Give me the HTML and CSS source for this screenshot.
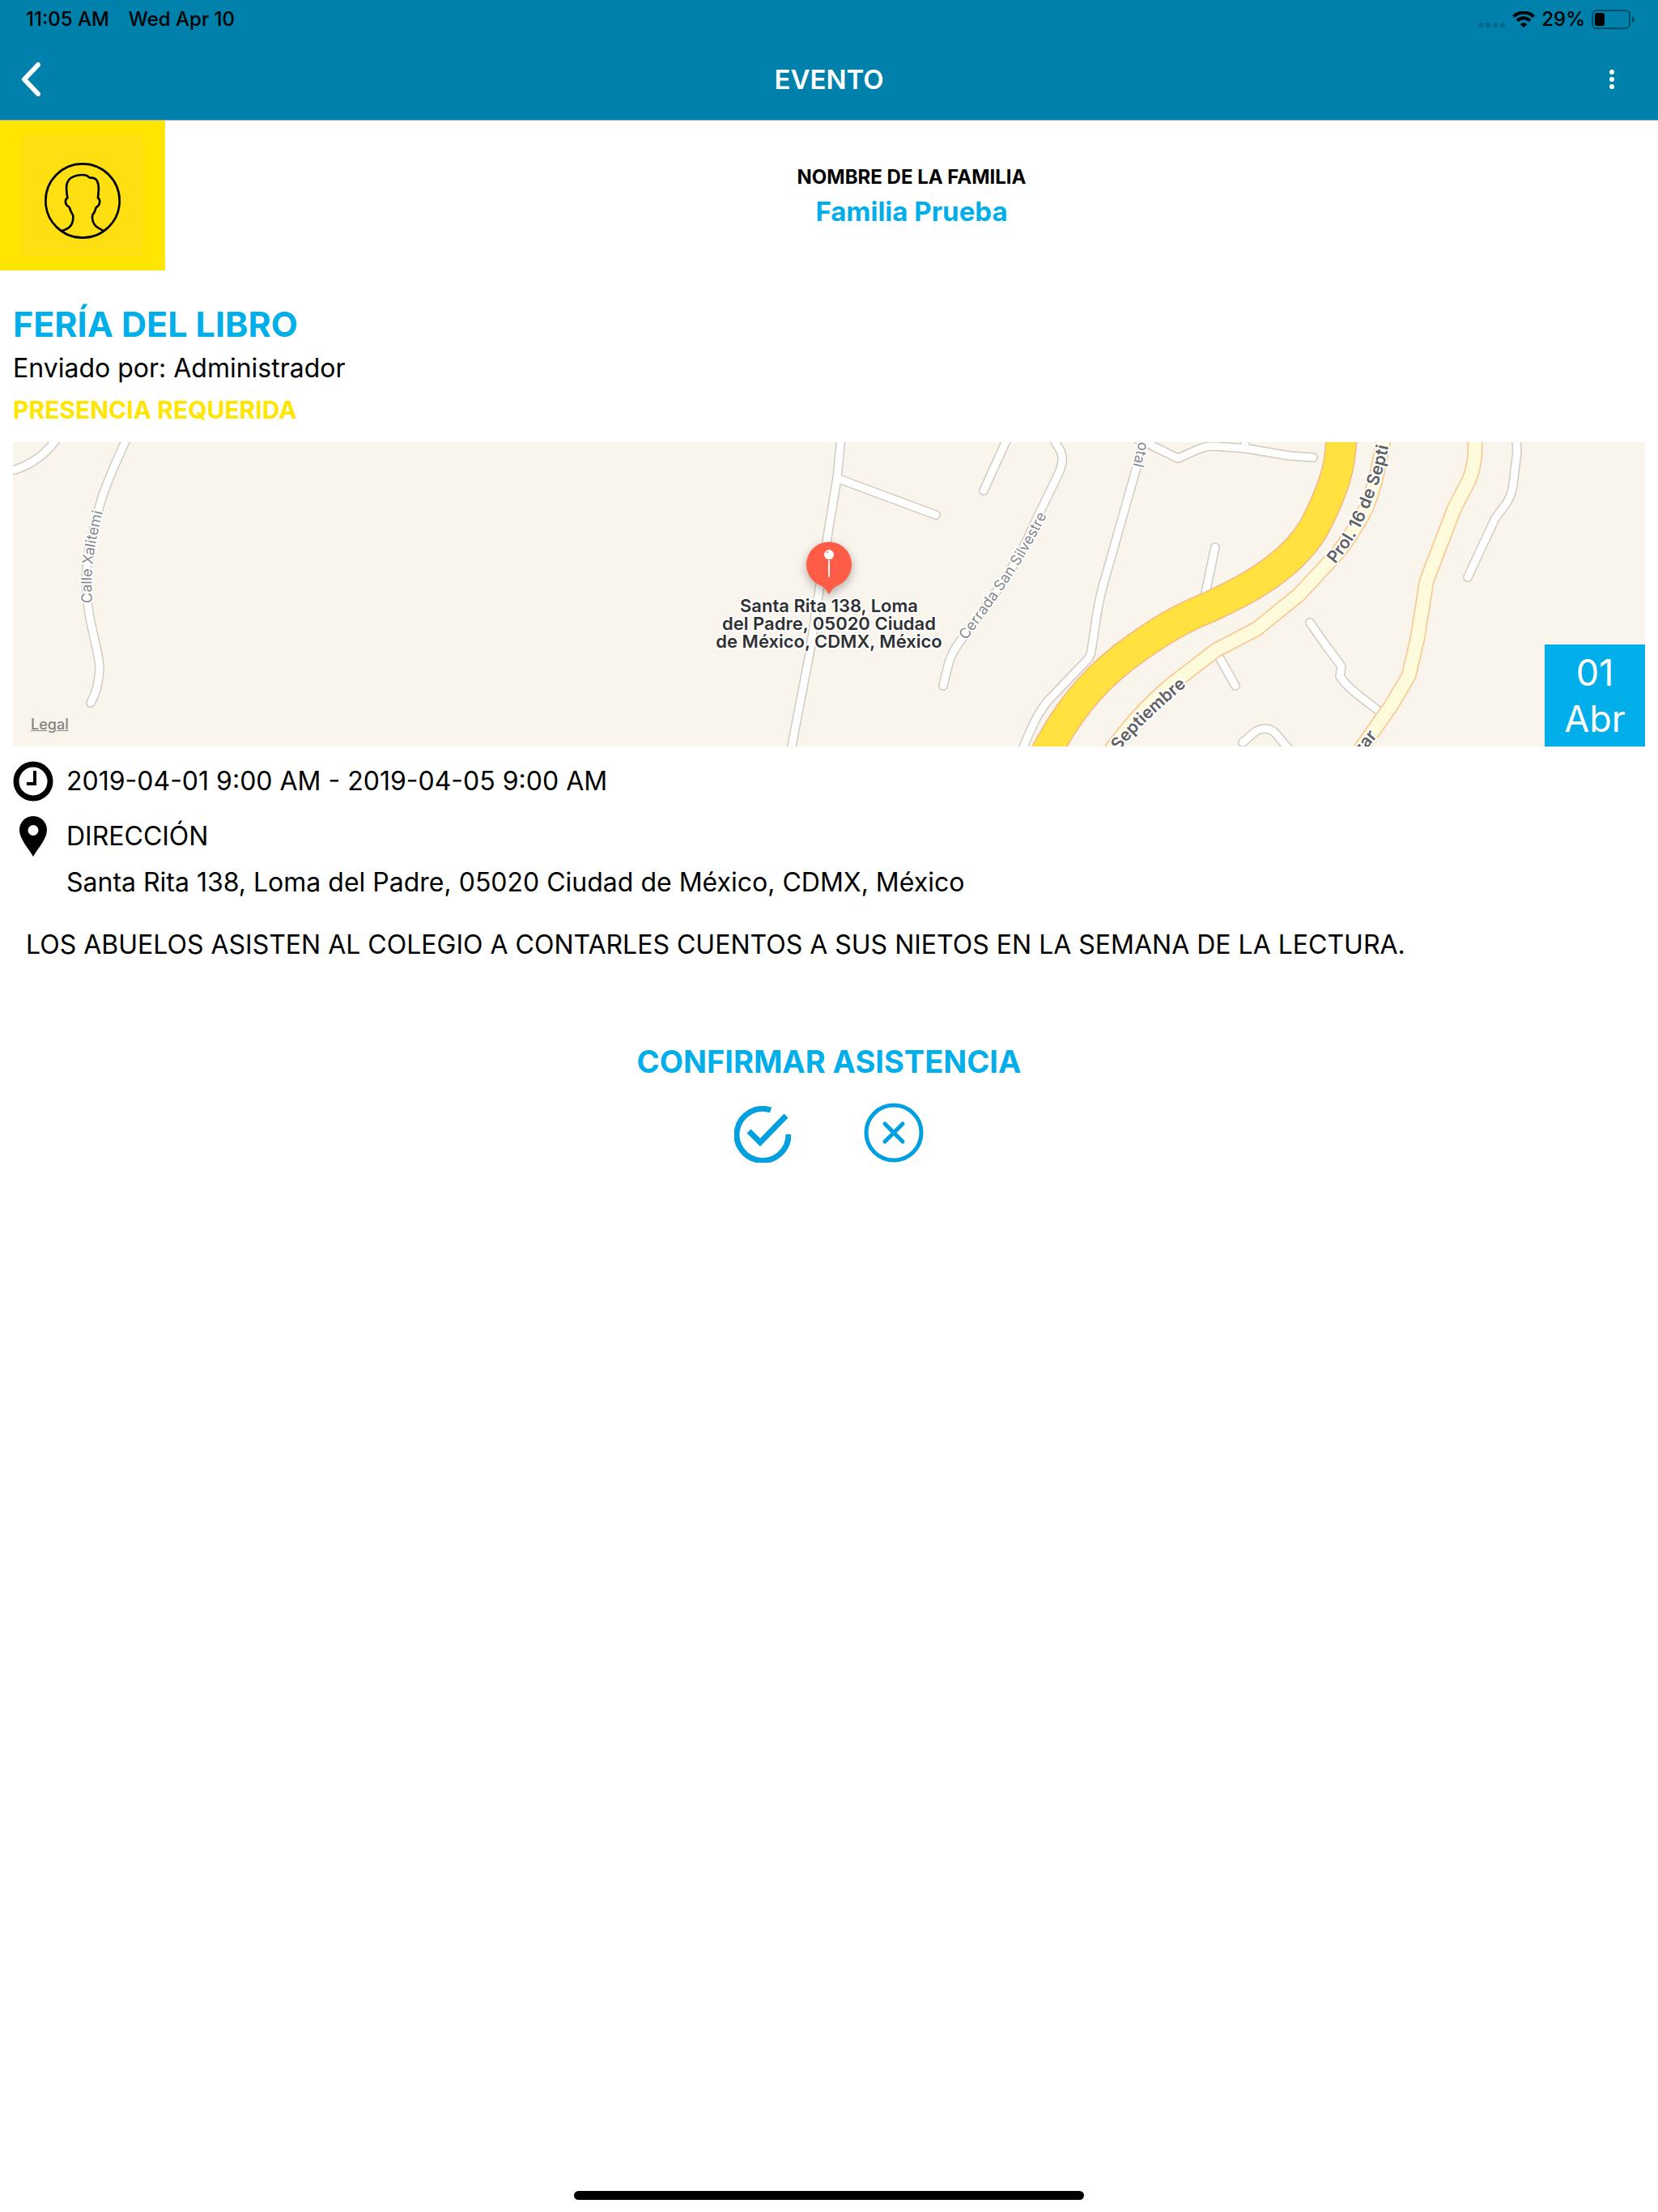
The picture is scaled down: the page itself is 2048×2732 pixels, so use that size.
FILE: index.html
```html
<!DOCTYPE html>
<html lang="es">
  <head>
    <meta charset="utf-8">
    <meta name="viewport" content="width=device-width, initial-scale=1">
    <title>Evento</title>
    <link rel="stylesheet" href="styles.css">
  </head>
  <body>
    <header class="top">
      <div class="status">
        <span>11:05 AM</span>
        <span>Wed Apr 10</span>
        <div class="status-right">
          <svg class="signal" width="34" height="6" viewBox="0 0 34 6" aria-hidden="true">
            <rect x="0" width="6" height="6" rx="2"/>
            <rect x="9" width="6" height="6" rx="2"/>
            <rect x="18" width="6" height="6" rx="2"/>
            <rect x="27" width="6" height="6" rx="2"/>
          </svg>
          <svg width="28" height="20" viewBox="0 0 28 20" aria-hidden="true">
            <path d="M1.500 6.500A18 18 0 0 1 26.500 6.500" fill="none" stroke="#000" stroke-width="4"/>
            <path d="M6 11.500A11.500 11.500 0 0 1 22 11.500" fill="none" stroke="#000" stroke-width="4"/>
            <path d="M9.500 16A7 7 0 0 1 18.500 16L14 20z"/>
          </svg>
          <span>29%</span>
          <svg width="54" height="24" viewBox="0 0 54 24" aria-hidden="true">
            <rect x="1" y="1" width="46" height="22" rx="5" fill="none" stroke="#004e68" stroke-width="2"/>
            <rect x="4" y="4" width="12" height="16" rx="3"/>
            <path d="M50 8c4 1 4 7 0 8z" fill="#004e68"/>
          </svg>
        </div>
      </div>
      <nav class="bar">
        <button class="icon-btn" aria-label="Regresar">
          <svg width="24" height="42" viewBox="0 0 24 42"><path d="M21 3L4 21L21 39" fill="none" stroke="#fff" stroke-width="6" stroke-linecap="round" stroke-linejoin="round"/></svg>
        </button>
        <h1>EVENTO</h1>
        <button class="icon-btn menu" aria-label="Opciones">
          <svg width="6" height="24" viewBox="0 0 6 24" fill="#fff"><circle cx="3" cy="3" r="3"/><circle cx="3" cy="12" r="3"/><circle cx="3" cy="21" r="3"/></svg>
        </button>
      </nav>
    </header>

    <section class="family">
      <div class="avatar">
        <div class="avatar-inner">
          <svg width="100" height="100" viewBox="0 0 300 300" fill="none" stroke="#000" stroke-width="8" aria-hidden="true">
            <circle cx="150" cy="150" r="137"/>
            <path d="M72 262C102 252 116 240 115 207C115 201 110 196 107 190C102 180 104 173 96 170C84 163 84 144 94 139C88 105 88 92 94 81C106 54 150 50 168 58C172 60 172 64 176 64C198 64 204 72 208 88C212 106 208 122 207 139C216 145 216 162 206 170C196 174 200 180 194 192C188 200 185 201 186 213C188 245 210 252 230 262"/>
          </svg>
        </div>
      </div>
      <div class="family-name">
        <p class="family-label">NOMBRE DE LA FAMILIA</p>
        <p class="family-value">Familia Prueba</p>
      </div>
    </section>

    <main>
      <h2 class="title">FERÍA DEL LIBRO</h2>
      <p class="sender">Enviado por: Administrador</p>
      <p class="required">PRESENCIA REQUERIDA</p>

      <div class="map">
        <svg class="map-canvas" viewBox="0 0 2016 376" preserveAspectRatio="xMidYMid slice" role="img" aria-label="Mapa">
          <defs>
            <g id="streets">
              <path d="M56 -6L46 6C36 17 22 28 3 34L-10 36"/>
              <path d="M141 -6C130 20 112 55 104 90C94 130 86 160 93 205C97 235 107 262 107 280C106 300 102 312 96 322"/>
              <path d="M1023 -6L1018 44L1006 117L984 261L960 386"/>
              <path d="M1019 45L1140 90"/>
              <path d="M1229 -6L1199 60"/>
              <path d="M1284 -6L1294 11Q1299 22 1292 38L1262 100C1240 155 1200 205 1170 246C1155 266 1155 278 1149 301"/>
              <path d="M1398 -6L1388 31L1352 158Q1342 191 1339 212L1332 258Q1331 266 1324 272L1279 319C1266 334 1258 352 1246 382"/>
              <path d="M1388 -4L1402 2L1439 20L1464 9Q1472 5 1484 5L1524 8L1577 17L1606 19"/>
              <path d="M1522 -6V8"/>
              <path d="M1485 130L1470 200"/>
              <path d="M1488 262L1510 301"/>
              <path d="M1519 371L1534 358Q1547 350 1558 358L1580 384"/>
              <path d="M1856 -6Q1859 8 1857 20L1853 52Q1851 68 1843 78L1831 94L1797 167"/>
              <path d="M1602 223L1621 250L1641 277L1639 289Q1646 300 1660 311L1692 336"/>
            </g>
            <path id="avenues" d="M1694 -8L1686 34C1679 65 1672 85 1657 107Q1645 128 1627 147L1588 189L1536 231L1486 257L1430 300C1402 324 1378 349 1354 384M1806 -8V12Q1805 30 1799 46L1780 83L1746 172L1735 242L1724 289L1702 326L1664 380"/>
            <path id="highway" d="M1641 -8C1640 30 1633 55 1607 106Q1590 134 1561 156C1530 180 1500 193 1475 205C1440 219 1415 235 1388 254C1345 284 1309 321 1276 384"/>
            <path id="lbl-xalitemi" d="M98 199C95 160 100 130 111 85L118 55"/>
            <path id="lbl-silvestre" d="M1178 245C1205 205 1240 165 1275 94L1290 60"/>
            <path id="lbl-otal" d="M1391 -1L1381 39"/>
            <path id="lbl-prol" d="M1633 151C1660 119 1670 95 1683 61C1692 38 1698 15 1706 -30"/>
            <path id="lbl-sept" d="M1366 382C1390 352 1415 330 1460 292"/>
            <path id="lbl-zar" d="M1665 388L1702 343"/>
          </defs>
          <use href="#streets" class="street-edge"/>
          <use href="#streets" class="street"/>
          <use href="#avenues" class="avenue-edge"/>
          <use href="#avenues" class="avenue"/>
          <use href="#highway" class="highway-edge"/>
          <use href="#highway" class="highway"/>
          <g class="street-name">
            <text><textPath href="#lbl-xalitemi">Calle Xalitemi</textPath></text>
            <text><textPath href="#lbl-silvestre">Cerrada San Silvestre</textPath></text>
            <text><textPath href="#lbl-otal">otal</textPath></text>
          </g>
          <g class="avenue-name">
            <text><textPath href="#lbl-prol">Prol. 16 de Septi</textPath></text>
            <text><textPath href="#lbl-sept">Septiembre</textPath></text>
            <text><textPath href="#lbl-zar">zar</textPath></text>
          </g>
          <g class="pin">
            <path d="M1008 188C1004 182 1002 179 997 177A28 28 0 1 1 1019 177C1014 179 1012 182 1008 188z" fill="#ff5c47"/>
            <circle cx="1008" cy="139" r="6" fill="#fff"/>
            <circle cx="1006" cy="136" r="1" fill="#ff5c47"/>
            <path d="M1007 146h2v19l-1 3l-1-3z" fill="#fff"/>
          </g>
          <g class="place-name">
            <text x="1008" y="210">Santa Rita 138, Loma</text>
            <text x="1008" y="232">del Padre, 05020 Ciudad</text>
            <text x="1008" y="254">de México, CDMX, México</text>
          </g>
        </svg>
        <a href="#" class="legal">Legal</a>
        <div class="date"><span>01</span><span>Abr</span></div>
      </div>

      <div class="row">
        <svg width="50" height="50" viewBox="0 0 50 50" fill="none" stroke="#000" aria-hidden="true">
          <circle cx="25" cy="25" r="21" stroke-width="7"/>
          <path d="M27 12V28H17" stroke-width="4"/>
        </svg>
        <p>2019-04-01 9:00 AM - 2019-04-05 9:00 AM</p>
      </div>
      <div class="row">
        <svg width="50" height="50" viewBox="0 0 50 50" aria-hidden="true">
          <path fill-rule="evenodd" d="M25 0C35 0 42 8 42 17C42 28 32 38 25 50C18 38 8 28 8 17C8 8 15 0 25 0zM25 11a6 6 0 1 0 0 13a6 6 0 1 0 0-13z"/>
        </svg>
        <p>DIRECCIÓN</p>
      </div>
      <p class="address">Santa Rita 138, Loma del Padre, 05020 Ciudad de México, CDMX, México</p>
      <p class="description">LOS ABUELOS ASISTEN AL COLEGIO A CONTARLES CUENTOS A SUS NIETOS EN LA SEMANA DE LA LECTURA.</p>

      <h3 class="confirm">CONFIRMAR ASISTENCIA</h3>
      <div class="answers">
        <button class="icon-btn" aria-label="Asistiré">
          <svg width="70" height="70" viewBox="0 0 70 70" fill="none" stroke="#009fdf" stroke-width="7">
            <path d="M45 5A32 32 0 1 0 67 35"/>
            <path d="M18 31L32 45L64 12"/>
          </svg>
        </button>
        <button class="icon-btn" aria-label="No asistiré">
          <svg width="74" height="74" viewBox="0 0 74 74" fill="none" stroke="#009fdf" stroke-width="5" stroke-linecap="round">
            <circle cx="37" cy="37" r="34"/>
            <path d="M26 26L48 48M48 26L26 48"/>
          </svg>
        </button>
      </div>
    </main>

    <div class="home-bar"></div>
  </body>
</html>
```

FILE: styles.css
```css
* {
    box-sizing: border-box;
}

body {
    margin: 0;
    min-height: 100vh;
    display: flex;
    flex-direction: column;
    font-family: Inter, "Liberation Sans", sans-serif;
    font-size: 32px;
    line-height: 50px;
    color: #000;
    background-color: #fff;
}

h1, h2, h3, p {
    margin: 0;
}

svg {
    display: block;
    flex-shrink: 0;
}

/* header */
.top {
    background-color: #0081ab;
    border-bottom: 1px solid #a8b4b8;
}

.status {
    display: flex;
    align-items: center;
    gap: 24px;
    height: 48px;
    padding: 0 28px 0 32px;
    font-size: 24px;
    font-weight: 500;
    line-height: 48px;
}

.status-right {
    display: flex;
    align-items: center;
    gap: 8px;
    margin-left: auto;
}

.signal {
    fill: #00678a;
    margin-top: 14px;
}

.bar {
    display: flex;
    align-items: center;
    justify-content: space-between;
    height: 100px;
    padding: 0 26px;
}

.bar h1 {
    font-size: 33px;
    font-weight: 600;
    color: #fff;
}

.icon-btn {
    padding: 0;
    border: none;
    background: none;
    cursor: pointer;
}

.bar .icon-btn {
    width: 60px;
}

.menu svg {
    margin: 0 28px 0 auto;
}

/* family */
.family {
    display: flex;
}

.avatar {
    display: flex;
    align-items: center;
    justify-content: center;
    width: 204px;
    height: 185px;
    background-color: #ffe600;
}

.avatar-inner {
    display: flex;
    align-items: center;
    justify-content: center;
    width: 150px;
    height: 152px;
    padding-top: 12px;
    background-color: #fddf12;
}

.family-name {
    flex: 1;
    display: flex;
    flex-direction: column;
    justify-content: center;
    padding-top: 2px;
    text-align: center;
}

.family-label {
    font-size: 24px;
    font-weight: 700;
    line-height: 36px;
}

.family-value {
    font-size: 33px;
    font-weight: 700;
    line-height: 48px;
    color: #00aee9;
}

/* event */
main {
    flex: 1;
    padding: 38px 16px 0;
}

.title {
    font-size: 43px;
    font-weight: 700;
    line-height: 56px;
    color: #00aee9;
}

.sender {
    line-height: 54px;
}

.required {
    font-size: 30px;
    font-weight: 700;
    line-height: 48px;
    color: #ffe600;
}

.map {
    position: relative;
    height: 376px;
    margin: 16px 0 18px;
    overflow: hidden;
    background-color: #f9f5ed;
}

.map-canvas {
    width: 100%;
    height: 100%;
}

.street-edge, .street, .avenue-edge, .avenue, .highway-edge, .highway {
    fill: none;
    stroke-linejoin: round;
}

.street-edge, .street {
    stroke-linecap: round;
}

.street-edge {
    stroke: #d3cabf;
    stroke-width: 12px;
}

.street {
    stroke: #fff;
    stroke-width: 9px;
}

.avenue-edge {
    stroke: #f8c48a;
    stroke-width: 19px;
}

.avenue {
    stroke: #fdfbdc;
    stroke-width: 16px;
}

.highway-edge {
    stroke: #f6b482;
    stroke-width: 39px;
}

.highway {
    stroke: #ffe140;
    stroke-width: 36px;
}

.street-name, .avenue-name, .place-name {
    paint-order: stroke;
    stroke: #fff;
    stroke-width: 4px;
    stroke-linejoin: round;
}

.street-name {
    font-size: 18px;
    fill: #87888b;
}

.avenue-name {
    font-size: 21px;
    font-weight: 600;
    fill: #5f6063;
}

.place-name {
    font-size: 22px;
    font-weight: 600;
    text-anchor: middle;
    fill: #2f3033;
}

.pin {
    filter: drop-shadow(0 4px 6px rgba(0, 0, 0, 0.3));
}

.legal {
    position: absolute;
    left: 22px;
    bottom: 16px;
    font-size: 18px;
    font-weight: 500;
    line-height: 22px;
    color: #858380;
}

.date {
    position: absolute;
    right: 0;
    bottom: 0;
    display: flex;
    flex-direction: column;
    align-items: center;
    justify-content: center;
    width: 124px;
    height: 126px;
    font-size: 45px;
    font-weight: 400;
    line-height: 57px;
    color: #fff;
    background-color: #00aee9;
}

.row {
    display: flex;
    gap: 16px;
    margin-bottom: 18px;
}

.address {
    margin: -11px 0 27px 66px;
}

.description {
    margin: 0 16px 90px;
}

.confirm {
    font-size: 38px;
    font-weight: 700;
    line-height: 58px;
    text-align: center;
    color: #00aee9;
}

.answers {
    display: flex;
    align-items: flex-end;
    justify-content: center;
    gap: 90px;
    margin-top: 22px;
}

.home-bar {
    width: 31%;
    max-width: 630px;
    height: 11px;
    margin: 0 auto 15px;
    border-radius: 6px;
    background-color: #000;
}
```
